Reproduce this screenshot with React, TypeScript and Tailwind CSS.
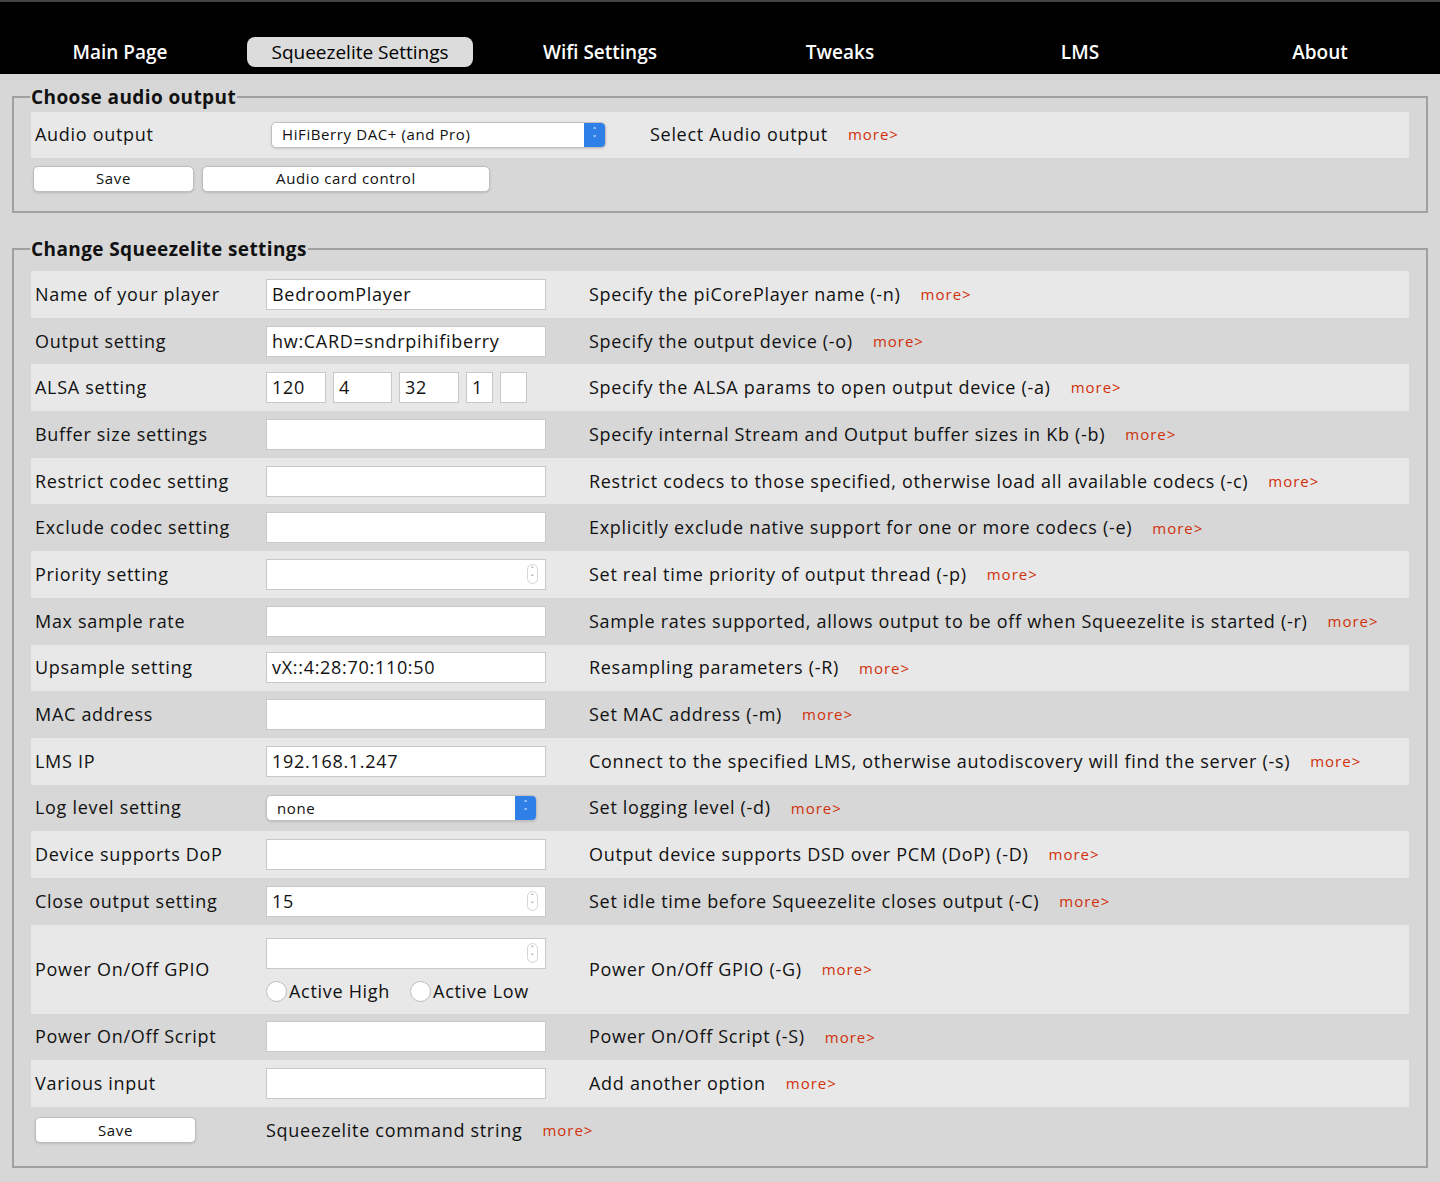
import React from 'react';

const font = { fontFamily: '"Open Sans", "DejaVu Sans", sans-serif' };

const tabs = ['Main Page', 'Squeezelite Settings', 'Wifi Settings', 'Tweaks', 'LMS', 'About'];

const More = () => <span className="ml-5 text-[15px] tracking-[1px] text-[#d0300a]">more&gt;</span>;

const Spin = () => (
  <span className="absolute right-[7px] top-1/2 -translate-y-1/2 w-[11px] h-[20px] rounded-full border border-gray-300 flex flex-col items-center justify-center text-[7px] leading-[8px] text-gray-600">
    <span>˄</span><span>˅</span>
  </span>
);

const Input = ({ value = '', spin = false, w = 'w-[280px]' }: { value?: string; spin?: boolean; w?: string }) => (
  <div className={`relative h-[31px] ${w} bg-white border border-[#c8c8c8] px-[5px] flex items-center text-[18px] tracking-[0.7px]`}>
    {value}
    {spin && <Spin />}
  </div>
);

const Select = ({ value, w }: { value: string; w: string }) => (
  <div className={`relative h-[26px] ${w} bg-white border border-[#c0c0c0] rounded-[5px] pl-[10px] flex items-center text-[15px] tracking-[0.6px] shadow-sm`}>
    {value}
    <span className="absolute right-0 top-0 bottom-0 w-[21px] bg-[#2f7fe8] rounded-r-[4px] flex flex-col items-center justify-center text-white text-[8px] leading-[8px] tracking-normal">
      <span>˄</span><span>˅</span>
    </span>
  </div>
);

const Btn = ({ label, w }: { label: string; w: string }) => (
  <div className={`h-[26px] ${w} bg-white border border-[#bdbdbd] rounded-[5px] flex items-center justify-center text-[15px] tracking-[0.6px] shadow-sm`}>{label}</div>
);

type Row = { label: string; field: React.ReactNode; desc: string; h?: string };

const rows: Row[] = [
  { label: 'Name of your player', field: <Input value="BedroomPlayer" />, desc: 'Specify the piCorePlayer name (-n)' },
  { label: 'Output setting', field: <Input value="hw:CARD=sndrpihifiberry" />, desc: 'Specify the output device (-o)' },
  {
    label: 'ALSA setting',
    field: (
      <div className="flex gap-[7px]">
        <Input value="120" w="w-[60px]" />
        <Input value="4" w="w-[59px]" />
        <Input value="32" w="w-[60px]" />
        <Input value="1" w="w-[27px]" />
        <Input w="w-[27px]" />
      </div>
    ),
    desc: 'Specify the ALSA params to open output device (-a)',
  },
  { label: 'Buffer size settings', field: <Input />, desc: 'Specify internal Stream and Output buffer sizes in Kb (-b)' },
  { label: 'Restrict codec setting', field: <Input />, desc: 'Restrict codecs to those specified, otherwise load all available codecs (-c)' },
  { label: 'Exclude codec setting', field: <Input />, desc: 'Explicitly exclude native support for one or more codecs (-e)' },
  { label: 'Priority setting', field: <Input spin />, desc: 'Set real time priority of output thread (-p)' },
  { label: 'Max sample rate', field: <Input />, desc: 'Sample rates supported, allows output to be off when Squeezelite is started (-r)' },
  { label: 'Upsample setting', field: <Input value="vX::4:28:70:110:50" />, desc: 'Resampling parameters (-R)' },
  { label: 'MAC address', field: <Input />, desc: 'Set MAC address (-m)' },
  { label: 'LMS IP', field: <Input value="192.168.1.247" />, desc: 'Connect to the specified LMS, otherwise autodiscovery will find the server (-s)' },
  { label: 'Log level setting', field: <Select value="none" w="w-[271px]" />, desc: 'Set logging level (-d)' },
  { label: 'Device supports DoP', field: <Input />, desc: 'Output device supports DSD over PCM (DoP) (-D)' },
  { label: 'Close output setting', field: <Input value="15" spin />, desc: 'Set idle time before Squeezelite closes output (-C)' },
  {
    label: 'Power On/Off GPIO',
    h: 'h-[89px]',
    field: (
      <div className="flex flex-col gap-[9px] pt-[4px]">
        <Input spin />
        <div className="flex items-center text-[18px]">
          <span className="w-[21px] h-[21px] rounded-full bg-white border border-[#bbb] mr-[2px]" />Active High
          <span className="w-[21px] h-[21px] rounded-full bg-white border border-[#bbb] ml-5 mr-[2px]" />Active Low
        </div>
      </div>
    ),
    desc: 'Power On/Off GPIO (-G)',
  },
  { label: 'Power On/Off Script', field: <Input />, desc: 'Power On/Off Script (-S)' },
  { label: 'Various input', field: <Input />, desc: 'Add another option' },
];

export default function App() {
  return (
    <div className="w-[1440px] h-[1182px] bg-[#d7d7d7] text-[#111] overflow-hidden" style={font}>
      <nav className="h-[74px] bg-black border-t-2 border-[#444] grid grid-cols-6 items-end pb-[7px]">
        {tabs.map((t, i) => (
          <div key={t} className="flex justify-center">
            <span className={`text-[19px] px-[24px] h-[30px] flex items-center rounded-[8px] ${i === 1 ? 'bg-[#dcdcdc] text-black' : 'text-white font-semibold'}`}>{t}</span>
          </div>
        ))}
      </nav>

      <fieldset className="mx-[12px] mt-[9px] border-2 border-[#a0a0a0] px-[17px] pb-[19px]">
        <legend className="font-bold text-[19px] tracking-[0.4px] px-[1px] -ml-[1px]">Choose audio output</legend>
        <div className="h-[46px] bg-[#e8e8e8] flex items-center text-[18px] tracking-[0.7px] pl-[4px]">
          <span className="w-[236px]">Audio output</span>
          <Select value="HiFiBerry DAC+ (and Pro)" w="w-[335px]" />
          <span className="ml-[44px]">Select Audio output</span>
          <More />
        </div>
        <div className="flex gap-[8px] mt-[8px] pl-[2px]">
          <Btn label="Save" w="w-[161px]" />
          <Btn label="Audio card control" w="w-[288px]" />
        </div>
      </fieldset>

      <fieldset className="mx-[12px] mt-[22px] border-2 border-[#a0a0a0] px-[17px] pb-[13px]">
        <legend className="font-bold text-[19px] tracking-[0.4px] px-[1px] -ml-[1px]">Change Squeezelite settings</legend>
        <div className="mt-[8px]">
          {rows.map((r, i) => (
            <div key={r.label} className={`${r.h ?? 'h-[46.7px]'} flex items-center text-[18px] tracking-[0.7px] pl-[4px] ${i % 2 === 0 ? 'bg-[#e8e8e8]' : ''}`}>
              <span className="w-[231px] shrink-0">{r.label}</span>
              <div className="w-[323px] shrink-0">{r.field}</div>
              <span>{r.desc}</span>
              <More />
            </div>
          ))}
          <div className="h-[46px] flex items-center text-[18px] tracking-[0.7px] pl-[4px]">
            <div className="w-[231px]"><Btn label="Save" w="w-[161px]" /></div>
            <span>Squeezelite command string</span>
            <More />
          </div>
        </div>
      </fieldset>
    </div>
  );
}
